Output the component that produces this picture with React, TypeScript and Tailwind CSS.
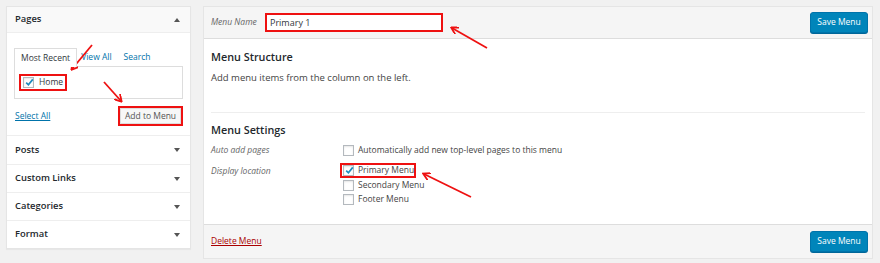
import React from "react";

const font = { fontFamily: '"Open Sans", "Noto Sans", Arial, sans-serif' };

function Box({ checked = false }: { checked?: boolean }) {
  return (
    <span className="relative inline-flex w-[11px] h-[11px] border border-[#b4b9be] bg-white shadow-[inset_0_1px_2px_rgba(0,0,0,0.1)] shrink-0">
      {checked && (
        <svg viewBox="0 0 11 11" className="absolute left-[0px] top-[-1px] w-[11px] h-[11px]">
          <path d="M2.2 5.6 L4.4 7.8 L8.8 2.4" fill="none" stroke="#1e8cbe" strokeWidth="1.7" />
        </svg>
      )}
    </span>
  );
}

function TriDown() {
  return (
    <svg viewBox="0 0 6 4" className="w-[6px] h-[4px]">
      <path d="M0 0 L6 0 L3 4 Z" fill="#555" />
    </svg>
  );
}
function TriUp() {
  return (
    <svg viewBox="0 0 6 4" className="w-[6px] h-[4px]">
      <path d="M0 4 L6 4 L3 0 Z" fill="#555" />
    </svg>
  );
}

function Row({ label, h }: { label: string; h: string }) {
  return (
    <div className={`flex items-center justify-between pl-[8px] pr-[10px] border-t border-[#eeeeee] ${h}`}>
      <span className="text-[9.4px] font-semibold text-[#23282d]">{label}</span>
      <TriDown />
    </div>
  );
}

function LeftPanel() {
  return (
    <div className="w-[185px] bg-white border border-[#e5e5e5] shadow-[0_1px_1px_rgba(0,0,0,0.04)]">
      <div className="h-[26px] flex items-center justify-between pl-[8px] pr-[10px] bg-[#f9f9f9] border-b border-[#eeeeee]">
        <span className="text-[9.4px] font-semibold text-[#23282d]">Pages</span>
        <TriUp />
      </div>
      <div className="px-[7px] pt-[15px] pb-[9px]">
        <div className="flex items-end text-[8.5px] whitespace-nowrap">
          <div className="relative z-10 h-[19px] -mb-px px-[6px] flex items-center bg-white border border-b-0 border-[#dddddd] text-[#32373c]">
            Most Recent
          </div>
          <span className="ml-[4px] h-[18px] flex items-center text-[#0073aa]">View All</span>
          <span className="ml-[12px] h-[18px] flex items-center text-[#0073aa]">Search</span>
        </div>
        <div className="h-[33px] border border-[#dddddd] bg-white pl-[4px] pt-[7px]">
          <div className="w-[48px] h-[17px] border-2 border-[#ee1111] flex items-center pl-[2px] gap-[5px]">
            <Box checked />
            <span className="text-[8.5px] text-[#32373c]">Home</span>
          </div>
        </div>
        <div className="mt-[7px] flex items-center justify-between">
          <span className="ml-[1px] text-[8.5px] text-[#0073aa] underline">Select All</span>
          <div className="w-[65px] h-[20px] border-2 border-[#ee1111] flex">
            <div className="flex-1 bg-[#f7f7f7] border border-[#dddddd] flex items-center justify-center text-[8.5px] text-[#555] whitespace-nowrap">
              Add to Menu
            </div>
          </div>
        </div>
      </div>
      <Row label="Posts" h="h-[29px]" />
      <Row label="Custom Links" h="h-[28px]" />
      <Row label="Categories" h="h-[28px]" />
      <Row label="Format" h="h-[28px]" />
    </div>
  );
}

function SaveButton() {
  return (
    <div className="w-[58px] h-[21px] rounded-[3px] bg-[#0085ba] border border-[#0073aa] shadow-[0_1px_0_#006799] flex items-center justify-center text-[8.5px] text-white whitespace-nowrap">
      Save Menu
    </div>
  );
}

function RightPanel() {
  return (
    <div className="w-[670px] bg-white border border-[#e5e5e5]">
      <div className="h-[32px] flex items-center pl-[7px] pr-[4px] bg-[#f5f5f5] border-b border-[#dddddd]">
        <span className="w-[54px] text-[8.5px] italic text-[#666] whitespace-nowrap">Menu Name</span>
        <div className="w-[178px] h-[19px] border-2 border-[#ee1111] bg-white flex items-center pl-[3px] text-[9px] text-[#32373c]">
          Primary 1
        </div>
        <div className="ml-auto">
          <SaveButton />
        </div>
      </div>
      <div className="px-[7px] pt-[10px] h-[185px]">
        <div className="h-[16px] flex items-center text-[10.8px] font-semibold text-[#23282d]">Menu Structure</div>
        <div className="mt-[7px] h-[12px] flex items-center text-[9.5px] text-[#444]">
          Add menu items from the column on the left.
        </div>
        <div className="mt-[28px] border-t border-[#eeeeee]" />
        <div className="mt-[9px] h-[16px] flex items-center text-[10.8px] font-semibold text-[#23282d]">Menu Settings</div>
        <div className="mt-[5px] flex h-[14px] items-center whitespace-nowrap">
          <span className="w-[132px] text-[8.5px] italic text-[#666]">Auto add pages</span>
          <Box />
          <span className="ml-[4px] text-[8.5px] text-[#444]">Automatically add new top-level pages to this menu</span>
        </div>
        <div className="mt-[7px] flex whitespace-nowrap">
          <span className="w-[132px] h-[14px] flex items-center text-[8.5px] italic text-[#666]">Display location</span>
          <div className="flex flex-col -ml-[3px]">
            <div className="h-[15px] w-[76px] -mt-px border-2 border-[#ee1111] flex items-center pl-[1px]">
              <Box checked />
              <span className="ml-[4px] text-[8.5px] text-[#444]">Primary Menu</span>
            </div>
            <div className="h-[14px] flex items-center pl-[3px]">
              <Box />
              <span className="ml-[4px] text-[8.5px] text-[#444]">Secondary Menu</span>
            </div>
            <div className="h-[14px] flex items-center pl-[3px]">
              <Box />
              <span className="ml-[4px] text-[8.5px] text-[#444]">Footer Menu</span>
            </div>
          </div>
        </div>
      </div>
      <div className="h-[34px] flex items-center justify-between pl-[7px] pr-[4px] bg-[#f5f5f5] border-t border-[#dddddd]">
        <span className="text-[8.5px] text-[#a00] underline">Delete Menu</span>
        <SaveButton />
      </div>
    </div>
  );
}

function Arrows() {
  const arrows = [
    [92, 45, 72, 69],
    [104, 82, 121, 101],
    [487, 48, 452, 28],
    [471, 197, 424, 174],
  ];
  return (
    <svg className="absolute left-0 top-0 pointer-events-none" width="880" height="263">
      <defs>
        <marker id="ah" markerWidth="8" markerHeight="8" refX="6" refY="4" orient="auto" markerUnits="userSpaceOnUse">
          <path d="M0 0 L7 4 L0 8" fill="none" stroke="#ee1111" strokeWidth="1.8" />
        </marker>
      </defs>
      {arrows.map(([x1, y1, x2, y2], i) => (
        <line key={i} x1={x1} y1={y1} x2={x2} y2={y2} stroke="#ee1111" strokeWidth="1.8" markerEnd="url(#ah)" />
      ))}
    </svg>
  );
}

export default function App() {
  return (
    <div className="relative w-[880px] h-[263px] bg-[#f1f1f1] overflow-hidden" style={font}>
      <div className="flex items-start pt-[6px] pl-[6px] gap-[12px]">
        <LeftPanel />
        <RightPanel />
      </div>
      <Arrows />
    </div>
  );
}
